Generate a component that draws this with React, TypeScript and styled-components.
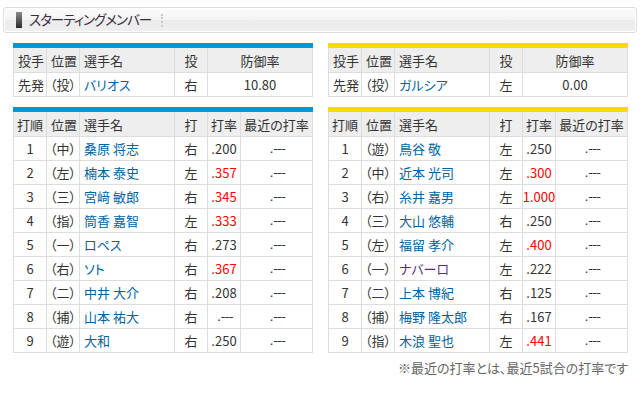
import React from "react";
import styled, { createGlobalStyle } from "styled-components";

const Global = createGlobalStyle`
  html, body { margin: 0; padding: 0; background: #fff; }
  body {
    font-family: "Noto Sans CJK JP", "Noto Sans", sans-serif;
    color: #333;
  }
`;

const Page = styled.div`
  padding: 7px 0 0 3px;
  width: 643px;
  box-sizing: border-box;
`;

const TitleBar = styled.div`
  width: 634px;
  height: 26px;
  box-sizing: border-box;
  border: 1px solid #dcdcdc;
  border-radius: 3px;
  background: linear-gradient(#fbfbfb 0%, #f4f4f4 50%, #ebebeb 52%, #efefef 100%);
  box-shadow: inset 0 0 0 1px #fff;
  display: flex;
  align-items: center;
  padding-left: 12px;
`;

const Marker = styled.span`
  width: 6px;
  height: 16px;
  background: linear-gradient(#8a8a8a, #2a2a2a);
  margin-right: 7px;
`;

const TitleText = styled.span`
  font-size: 13.5px;
  color: #3a2c42;
  font-feature-settings: "palt";
  letter-spacing: -1px;
  line-height: 1;
`;

const Dots = styled.span`
  width: 0;
  height: 13px;
  border-left: 2px dotted #c8c8c8;
  margin-left: 10px;
`;

const Content = styled.div`
  padding: 10px 0 0 10px;
`;

const Pair = styled.div<{ $mt?: number }>`
  display: grid;
  grid-template-columns: 300px 300px;
  column-gap: 15px;
  margin-top: ${(p) => p.$mt ?? 0}px;
`;

const Grid = styled.div<{ $team: "blue" | "yellow"; $cols: string }>`
  display: grid;
  grid-template-columns: ${(p) => p.$cols};
  gap: 1px;
  background: #dddddd;
  border-top: 5px solid ${(p) => (p.$team === "blue" ? "#0096dc" : "#fedb00")};
  padding: 0 1px 1px 1px;
  width: 300px;
  box-sizing: border-box;
`;

const Cell = styled.div<{ $head?: boolean; $align?: "left" | "center"; $color?: string }>`
  background: ${(p) => (p.$head ? "#eeeeee" : "#ffffff")};
  height: ${(p) => (p.$head ? 24 : 23)}px;
  display: flex;
  align-items: center;
  justify-content: ${(p) => (p.$align === "left" ? "flex-start" : "center")};
  padding: ${(p) => (p.$align === "left" ? "0 0 0 4px" : "0")};
  font-size: 13px;
  color: ${(p) => p.$color ?? "#333"};
  white-space: nowrap;
  font-feature-settings: "palt";
  line-height: 1;
`;

const Pos = styled(Cell)`
  justify-content: flex-start;
  padding-left: 3px;
`;

const Dash = styled(Cell)`
  font-family: "DejaVu Sans", sans-serif;
  font-size: 13px;
  letter-spacing: -0.6px;
  padding-left: 2px;
`;

const Note = styled.div`
  width: 615px;
  text-align: right;
  font-size: 13px;
  color: #666;
  margin-top: 5px;
  font-feature-settings: "palt";
`;

const LINK = "#00639f";
const VISITED = "#5a2b86";
const RED = "#f00";

const pitcherCols = "32px 32px 94px 32px 104px";
const lineupCols = "32px 32px 94px 32px 32px 71px";

type Pitcher = { name: string; hand: string; era: string };
type Batter = { pos: string; name: string; hand: string; avg: string; hot?: boolean; visited?: boolean };

const PitcherTable = ({ team, p }: { team: "blue" | "yellow"; p: Pitcher }) => (
  <Grid $team={team} $cols={pitcherCols}>
    <Cell $head $align="left">投手</Cell>
    <Cell $head $align="left">位置</Cell>
    <Cell $head $align="left">選手名</Cell>
    <Cell $head>投</Cell>
    <Cell $head>防御率</Cell>
    <Cell $align="left">先発</Cell>
    <Pos>（投）</Pos>
    <Cell $align="left" $color={LINK}>{p.name}</Cell>
    <Cell>{p.hand}</Cell>
    <Cell>{p.era}</Cell>
  </Grid>
);

const LineupTable = ({ team, rows }: { team: "blue" | "yellow"; rows: Batter[] }) => (
  <Grid $team={team} $cols={lineupCols}>
    <Cell $head>打順</Cell>
    <Cell $head $align="left">位置</Cell>
    <Cell $head $align="left">選手名</Cell>
    <Cell $head>打</Cell>
    <Cell $head>打率</Cell>
    <Cell $head>最近の打率</Cell>
    {rows.map((r, i) => (
      <React.Fragment key={i}>
        <Cell>{i + 1}</Cell>
        <Pos>（{r.pos}）</Pos>
        <Cell $align="left" $color={r.visited ? VISITED : LINK}>{r.name}</Cell>
        <Cell>{r.hand}</Cell>
        {r.avg === ".---" ? (
          <Dash>.---</Dash>
        ) : (
          <Cell $color={r.hot ? RED : "#333"}>{r.avg}</Cell>
        )}
        <Dash>.---</Dash>
      </React.Fragment>
    ))}
  </Grid>
);

const left: Batter[] = [
  { pos: "中", name: "桑原 将志", hand: "右", avg: ".200" },
  { pos: "左", name: "楠本 泰史", hand: "左", avg: ".357", hot: true },
  { pos: "三", name: "宮﨑 敏郎", hand: "右", avg: ".345", hot: true },
  { pos: "指", name: "筒香 嘉智", hand: "左", avg: ".333", hot: true },
  { pos: "一", name: "ロペス", hand: "右", avg: ".273" },
  { pos: "右", name: "ソト", hand: "右", avg: ".367", hot: true },
  { pos: "二", name: "中井 大介", hand: "右", avg: ".208" },
  { pos: "捕", name: "山本 祐大", hand: "右", avg: ".---" },
  { pos: "遊", name: "大和", hand: "右", avg: ".250" },
];

const right: Batter[] = [
  { pos: "遊", name: "鳥谷 敬", hand: "左", avg: ".250" },
  { pos: "中", name: "近本 光司", hand: "左", avg: ".300", hot: true },
  { pos: "右", name: "糸井 嘉男", hand: "左", avg: "1.000", hot: true },
  { pos: "三", name: "大山 悠輔", hand: "右", avg: ".250" },
  { pos: "左", name: "福留 孝介", hand: "左", avg: ".400", hot: true },
  { pos: "一", name: "ナバーロ", hand: "左", avg: ".222", visited: true },
  { pos: "二", name: "上本 博紀", hand: "右", avg: ".125" },
  { pos: "捕", name: "梅野 隆太郎", hand: "右", avg: ".167" },
  { pos: "指", name: "木浪 聖也", hand: "左", avg: ".441", hot: true },
];

export default function App() {
  return (
    <Page>
      <Global />
      <TitleBar>
        <Marker />
        <TitleText>スターティングメンバー</TitleText>
        <Dots />
      </TitleBar>
      <Content>
        <Pair>
          <PitcherTable team="blue" p={{ name: "バリオス", hand: "右", era: "10.80" }} />
          <PitcherTable team="yellow" p={{ name: "ガルシア", hand: "左", era: "0.00" }} />
        </Pair>
        <Pair $mt={10}>
          <LineupTable team="blue" rows={left} />
          <LineupTable team="yellow" rows={right} />
        </Pair>
        <Note>※最近の打率とは、最近5試合の打率です</Note>
      </Content>
    </Page>
  );
}
